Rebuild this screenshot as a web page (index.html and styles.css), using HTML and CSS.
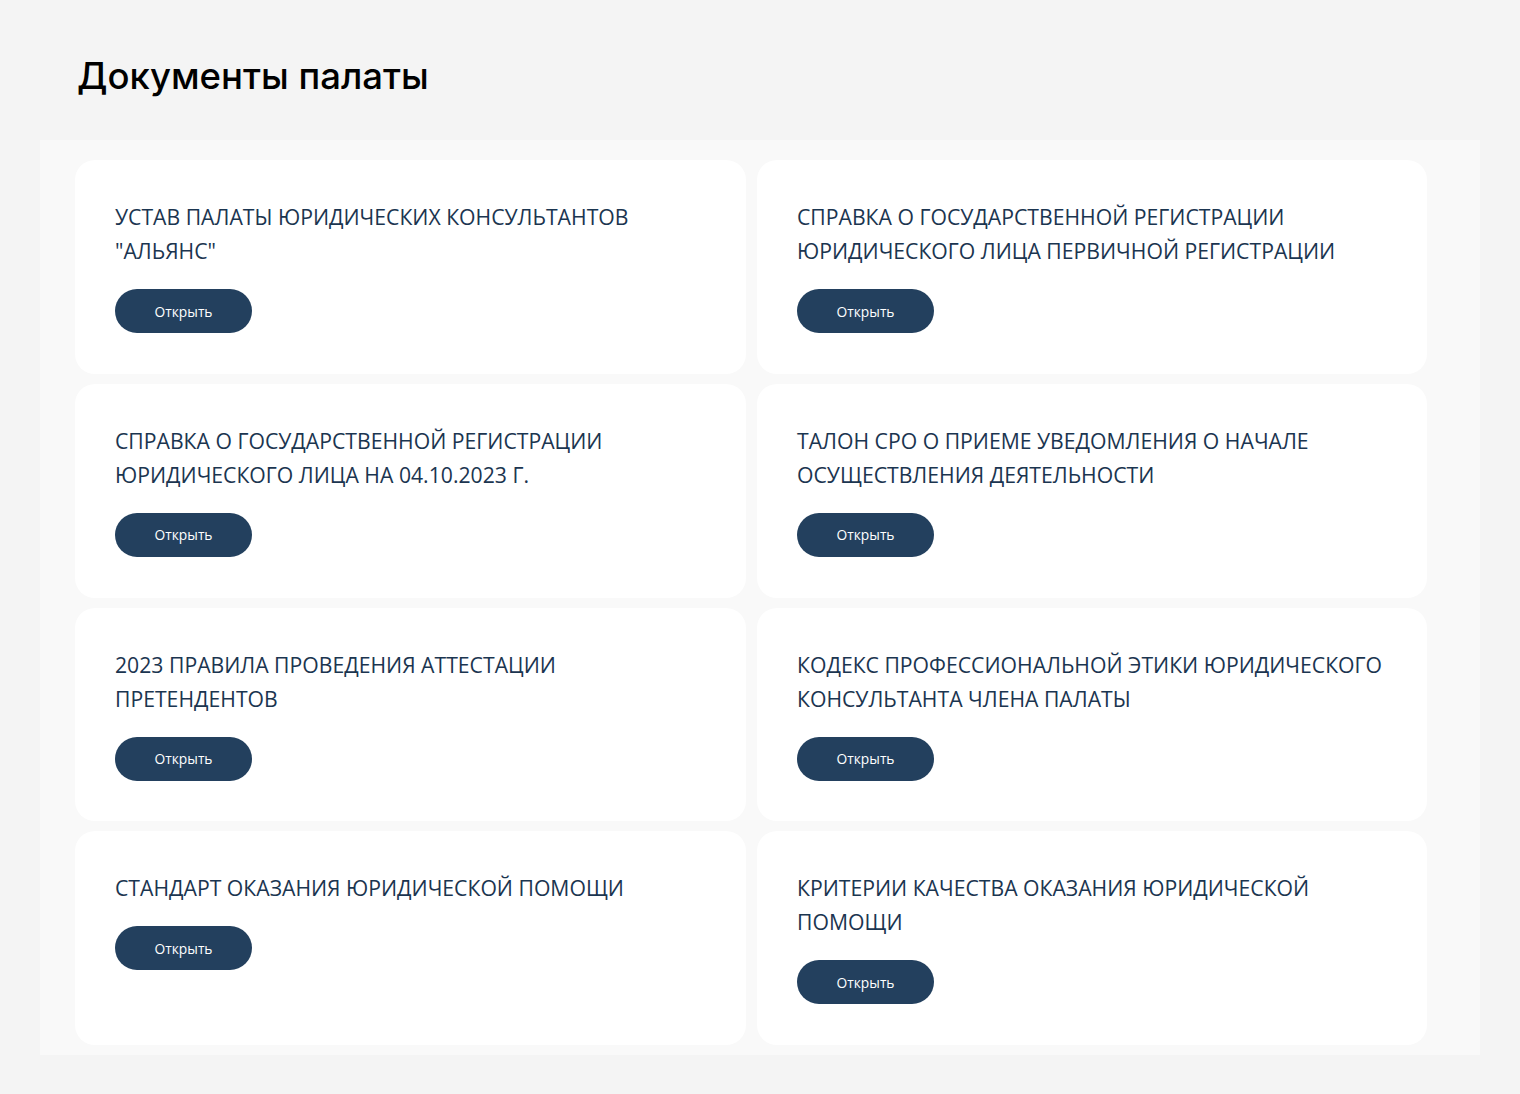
FILE: index.html
```html
<!DOCTYPE html>
<html lang="ru">
<head>
<meta charset="utf-8">
<title>Документы палаты</title>
<link rel="stylesheet" href="styles.css">
</head>
<body>
<main class="page">
  <h1 class="page-title">Документы палаты</h1>
  <section class="panel">
    <div class="grid">
      <article class="card">
        <h2 class="card-title">УСТАВ ПАЛАТЫ ЮРИДИЧЕСКИХ КОНСУЛЬТАНТОВ "АЛЬЯНС"</h2>
        <a class="btn" href="#">Открыть</a>
      </article>
      <article class="card">
        <h2 class="card-title">СПРАВКА О ГОСУДАРСТВЕННОЙ РЕГИСТРАЦИИ ЮРИДИЧЕСКОГО ЛИЦА ПЕРВИЧНОЙ РЕГИСТРАЦИИ</h2>
        <a class="btn" href="#">Открыть</a>
      </article>
      <article class="card">
        <h2 class="card-title">СПРАВКА О ГОСУДАРСТВЕННОЙ РЕГИСТРАЦИИ ЮРИДИЧЕСКОГО ЛИЦА НА 04.10.2023 Г.</h2>
        <a class="btn" href="#">Открыть</a>
      </article>
      <article class="card">
        <h2 class="card-title">ТАЛОН СРО О ПРИЕМЕ УВЕДОМЛЕНИЯ О НАЧАЛЕ ОСУЩЕСТВЛЕНИЯ ДЕЯТЕЛЬНОСТИ</h2>
        <a class="btn" href="#">Открыть</a>
      </article>
      <article class="card">
        <h2 class="card-title">2023 ПРАВИЛА ПРОВЕДЕНИЯ АТТЕСТАЦИИ ПРЕТЕНДЕНТОВ</h2>
        <a class="btn" href="#">Открыть</a>
      </article>
      <article class="card">
        <h2 class="card-title">КОДЕКС ПРОФЕССИОНАЛЬНОЙ ЭТИКИ ЮРИДИЧЕСКОГО КОНСУЛЬТАНТА ЧЛЕНА ПАЛАТЫ</h2>
        <a class="btn" href="#">Открыть</a>
      </article>
      <article class="card">
        <h2 class="card-title">СТАНДАРТ ОКАЗАНИЯ ЮРИДИЧЕСКОЙ ПОМОЩИ</h2>
        <a class="btn" href="#">Открыть</a>
      </article>
      <article class="card">
        <h2 class="card-title">КРИТЕРИИ КАЧЕСТВА ОКАЗАНИЯ ЮРИДИЧЕСКОЙ ПОМОЩИ</h2>
        <a class="btn" href="#">Открыть</a>
      </article>
    </div>
  </section>
</main>
</body>
</html>
```

FILE: styles.css
```css
* { box-sizing: border-box; }
html, body {
  margin: 0;
  padding: 0;
  background: #f4f4f4;
}
body {
  font-family: "Open Sans", "Noto Sans", sans-serif;
}
.page {
  padding: 0 40px 40px;
}
.page-title {
  margin: 0;
  padding: 54px 0 0 37px;
  height: 140px;
  font-family: Inter, Roboto, sans-serif;
  font-weight: 500;
  font-size: 36.5px;
  line-height: 44px;
  color: #000;
  letter-spacing: 0;
}
.panel {
  background: #f9f9f9;
  padding: 20px 53px 10px 35px;
}
.grid {
  display: grid;
  grid-template-columns: 671px 670px;
  column-gap: 11px;
  row-gap: 10px;
}
.card {
  background: #fff;
  border-radius: 20px;
  padding: 40px;
  display: flex;
  flex-direction: column;
  align-items: flex-start;
  min-height: 213.75px;
}
.card-title {
  margin: 0 0 21px;
  font-weight: 400;
  font-size: 21.2px;
  line-height: 34px;
  color: #1b3550;
}
.btn {
  display: inline-flex;
  align-items: center;
  justify-content: center;
  width: 137px;
  height: 44px;
  border-radius: 22px;
  background: #23405e;
  color: #fff;
  font-size: 13.8px;
  text-decoration: none;
  font-weight: 500;
}
```
